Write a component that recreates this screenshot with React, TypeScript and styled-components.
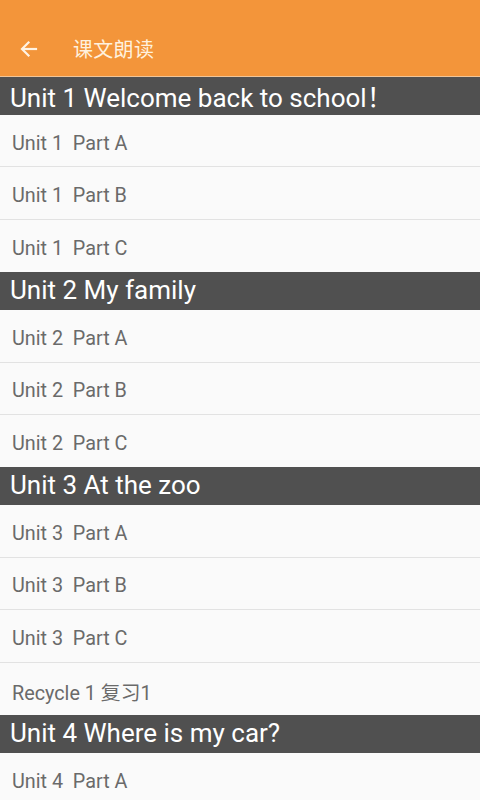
import styled, { createGlobalStyle } from 'styled-components';

const GlobalStyle = createGlobalStyle`
	html, body {
		margin: 0;
		padding: 0;
		background: #fafafa;
		font-family: Roboto, 'Noto Sans CJK SC', sans-serif;
	}
`;

const Page = styled.div`
	width: 480px;
	height: 800px;
	overflow: hidden;
	display: flex;
	flex-direction: column;
	background: #fafafa;
`;

const Toolbar = styled.header`
	height: 77px;
	flex-shrink: 0;
	box-sizing: border-box;
	background: #f3953a;
	border-bottom: 1px solid #f2c597;
	display: flex;
	align-items: center;
	padding-top: 21px;
`;

const BackButton = styled.button`
	background: none;
	border: none;
	padding: 0;
	margin-left: 17px;
	width: 24px;
	height: 24px;
	display: flex;
	align-items: center;
	justify-content: center;
	color: #fff3e3;
	cursor: pointer;
	svg {
		width: 24px;
		height: 24px;
	}
`;

const Title = styled.h1`
	margin: 0 0 0 32px;
	font-size: 20px;
	font-weight: 400;
	color: #fff1de;
	letter-spacing: 0.3px;
`;

const SectionHeader = styled.div`
	height: 38px;
	flex-shrink: 0;
	background: #505050;
	color: #ffffff;
	font-size: 26px;
	display: flex;
	align-items: center;
	padding: 0 0 2px 10px;
	box-sizing: border-box;
`;

const Row = styled.div<{ $last?: boolean }>`
	height: 52.4px;
	flex-shrink: 0;
	box-sizing: border-box;
	border-bottom: ${(p) => (p.$last ? 'none' : '1px solid #e2e2e2')};
	display: flex;
	align-items: center;
	padding-left: 12px;
	padding-top: 5px;
	font-size: 19.8px;
	color: #6a6a6a;
	white-space: pre;
`;

const sections = [
	{
		title: 'Unit 1 Welcome back to school！',
		items: ['Unit 1  Part A', 'Unit 1  Part B', 'Unit 1  Part C'],
	},
	{
		title: 'Unit 2 My family',
		items: ['Unit 2  Part A', 'Unit 2  Part B', 'Unit 2  Part C'],
	},
	{
		title: 'Unit 3 At the zoo',
		items: ['Unit 3  Part A', 'Unit 3  Part B', 'Unit 3  Part C', 'Recycle 1 复习1'],
	},
	{
		title: 'Unit 4 Where is my car?',
		items: ['Unit 4  Part A', 'Unit 4  Part B', 'Unit 4  Part C'],
	},
];

export default function App() {
	return (
		<Page>
			<GlobalStyle />
			<Toolbar>
				<BackButton aria-label="back">
					<svg viewBox="0 0 24 24" fill="none" stroke="currentColor" strokeWidth="2.2" strokeLinecap="square">
						<path d="M19 12H6" />
						<path d="M11.5 5.5 5 12l6.5 6.5" />
					</svg>
				</BackButton>
				<Title>课文朗读</Title>
			</Toolbar>
			{sections.map((s) => (
				<div key={s.title}>
					<SectionHeader>{s.title}</SectionHeader>
					{s.items.map((item, i) => (
						<Row key={item} $last={i === s.items.length - 1}>
							{item}
						</Row>
					))}
				</div>
			))}
		</Page>
	);
}
